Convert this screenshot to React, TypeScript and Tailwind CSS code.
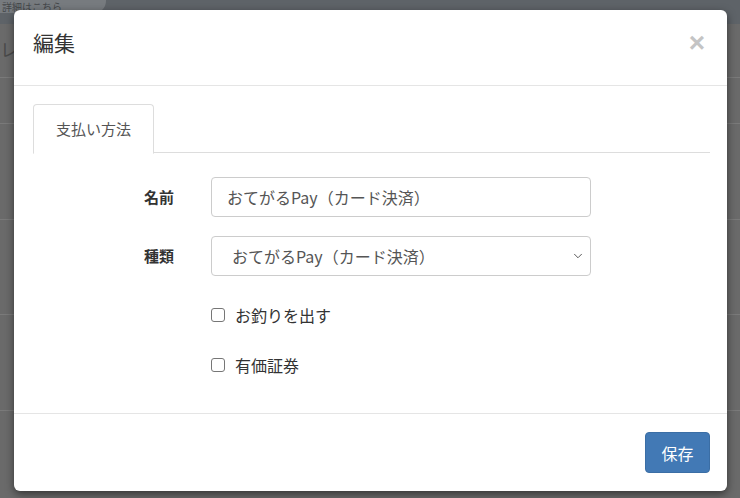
import { ChevronDown } from "lucide-react";

const font = { fontFamily: '"Noto Sans CJK JP", "Noto Sans", sans-serif' };

const Backdrop = () => (
  <div className="absolute inset-0 flex flex-col bg-[#6a6a6a]">
    <div className="h-[24px] bg-[#5e6368] flex items-start">
      <div className="h-[13px] w-[106px] rounded-br-[12px] bg-[#777b7f] text-[10px] leading-[13px] pl-[2px] text-[#44474a]">
        詳細はこちら
      </div>
    </div>
    <div className="h-[54px] border-b border-[#7a7a7a] text-[18px] text-[#4a4a4a] pt-[12px]">レ</div>
    <div className="h-[46px] border-b border-[#7a7a7a]" />
    <div className="h-[96px] border-b border-[#7a7a7a]" />
    <div className="h-[95px] border-b border-[#7a7a7a]" />
    <div className="h-[96px] border-b border-[#7a7a7a]" />
  </div>
);

const Checkbox = ({ label }: { label: string }) => (
  <label className="flex items-center gap-[10px] h-[20px] text-[16px] text-[#333]">
    <input
      type="checkbox"
      className="appearance-none w-[14px] h-[14px] border border-[#767676] rounded-[3px] bg-white"
    />
    {label}
  </label>
);

export default function App() {
  return (
    <div className="relative w-[740px] h-[498px] overflow-hidden" style={font}>
      <Backdrop />
      <div className="absolute left-[14px] top-[10px] w-[713px] h-[481px] bg-white rounded-[6px] shadow-[0_3px_9px_rgba(0,0,0,0.5)] flex flex-col">
        {/* header */}
        <div className="h-[76px] border-b border-[#e5e5e5] flex items-center justify-between pl-[19px] pr-[22px] pb-[9px]">
          <h4 className="text-[21px] text-[#333] font-normal">編集</h4>
          <span className="text-[28px] leading-none font-bold text-[#c4c4c4]" style={{ fontFamily: '"Liberation Sans", sans-serif' }}>
            ×
          </span>
        </div>
        {/* body */}
        <div className="flex-1 pt-[18px] pl-[19px] pr-[17px]">
          <div className="flex border-b border-[#ddd] h-[49px]">
            <div className="w-[121px] h-[50px] border border-[#ddd] border-b-white rounded-t-[4px] bg-white flex items-center justify-center text-[15px] text-[#555]">
              支払い方法
            </div>
          </div>
          <div className="mt-[24px] flex flex-col">
            <div className="flex items-center">
              <div className="w-[141px] text-right text-[15px] font-bold text-[#333]">名前</div>
              <input
                defaultValue="おてがるPay（カード決済）"
                className="ml-[37px] w-[380px] h-[40px] border border-[#ccc] rounded-[4px] px-[15px] text-[16px] text-[#555] outline-none"
                style={font}
              />
            </div>
            <div className="flex items-center mt-[19px]">
              <div className="w-[141px] text-right text-[15px] font-bold text-[#333]">種類</div>
              <div className="relative ml-[37px]">
                <select
                  className="appearance-none w-[380px] h-[40px] border border-[#ccc] rounded-[4px] pl-[20px] text-[16px] text-[#555] bg-white outline-none"
                  style={font}
                >
                  <option>おてがるPay（カード決済）</option>
                </select>
                <ChevronDown className="absolute right-[6px] top-[13px] text-[#444]" size={14} strokeWidth={1.5} />
              </div>
            </div>
            <div className="ml-[178px] mt-[29px] flex flex-col gap-[30px]">
              <Checkbox label="お釣りを出す" />
              <Checkbox label="有価証券" />
            </div>
          </div>
        </div>
        {/* footer */}
        <div className="h-[78px] border-t border-[#e5e5e5] flex items-center justify-end pr-[17px]">
          <button className="w-[65px] h-[41px] rounded-[4px] bg-[#4279b5] border border-[#3b6ea5] text-white text-[16px]">
            保存
          </button>
        </div>
      </div>
    </div>
  );
}
